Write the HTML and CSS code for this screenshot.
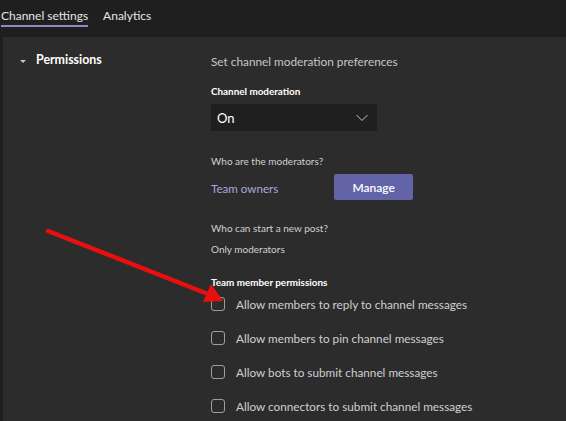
FILE: index.html
```html
<!DOCTYPE html>
<html>
<head>
<meta charset="utf-8">
<link rel="stylesheet" href="styles.css">
</head>
<body>
<header class="tabs">
  <span class="tab active">Channel settings</span>
  <span class="tab">Analytics</span>
</header>
<main class="panel">
  <div class="side">
    <span class="caret"></span>
    <span class="section-title">Permissions</span>
  </div>
  <div class="content">
    <p class="intro">Set channel moderation preferences</p>
    <p class="label strong">Channel moderation</p>
    <div class="select">
      <span>On</span>
      <svg class="chev" width="12" height="8" viewBox="0 0 12 8"><path d="M0.5 1 L6 6.5 L11.5 1" fill="none" stroke="#c8c6c4" stroke-width="1"/></svg>
    </div>
    <p class="label q1">Who are the moderators?</p>
    <div class="owners-row">
      <span class="owners">Team owners</span>
      <button class="manage">Manage</button>
    </div>
    <p class="label q2">Who can start a new post?</p>
    <p class="label answer">Only moderators</p>
    <p class="label strong perms">Team member permissions</p>
    <ul class="checks">
      <li><span class="box"></span>Allow members to reply to channel messages</li>
      <li><span class="box"></span>Allow members to pin channel messages</li>
      <li><span class="box"></span>Allow bots to submit channel messages</li>
      <li><span class="box"></span>Allow connectors to submit channel messages</li>
    </ul>
  </div>
</main>
<svg class="arrow" width="566" height="421" viewBox="0 0 566 421">
  <line x1="48" y1="231" x2="208" y2="294" stroke="#e8100f" stroke-width="4.5" stroke-linecap="round"/>
  <polygon points="223,301 203,302 211,284" fill="#e8100f"/>
</svg>
</body>
</html>
```
FILE: styles.css
```css
* { box-sizing: border-box; }
html, body { margin: 0; padding: 0; }
body {
  width: 566px;
  height: 421px;
  overflow: hidden;
  background: #1f1f1f;
  font-family: "Segoe UI", Lato, "Open Sans", sans-serif;
  color: #d6d6d6;
  position: relative;
}
.tabs {
  height: 37px;
  display: flex;
  gap: 15px;
  padding-left: 1px;
  font-size: 12px;
}
.tab {
  padding-top: 8px;
  height: 27px;
  color: #e6e6e6;
}
.tab.active {
  border-bottom: 2px solid #8b8cc7;
}
.panel {
  margin-left: 3px;
  background: #2d2c2c;
  height: 384px;
  display: flex;
}
.side {
  width: 208px;
  padding: 15px 0 0 17px;
  display: flex;
  align-items: flex-start;
  gap: 10px;
}
.caret {
  margin-top: 8px;
  width: 0; height: 0;
  border-left: 3px solid transparent;
  border-right: 3px solid transparent;
  border-top: 3px solid #c8c6c4;
}
.section-title {
  font-weight: 700;
  font-size: 12.4px;
  color: #ffffff;
}
.content {
  padding-top: 16px;
  flex: 1;
}
p { margin: 0; }
.intro {
  font-size: 11.8px;
  color: #c8c6c4;
  line-height: 17px;
}
.label {
  font-size: 10px;
  color: #d0d0d0;
  line-height: 14px;
}
.label.strong { font-weight: 700; color: #ffffff; font-size: 9.9px; }
.intro + .label { margin-top: 14px; }
.select {
  margin-top: 6px;
  width: 166px;
  height: 27px;
  background: #1f1f1f;
  display: flex;
  align-items: center;
  justify-content: space-between;
  padding: 0 9px 0 6px;
  font-size: 13px;
  color: #ffffff;
}
.q1 { margin-top: 23px; }
.owners-row {
  margin-top: 6px;
  display: flex;
  align-items: center;
  gap: 56px;
}
.owners {
  font-size: 11.6px;
  color: #a6a7dc;
  padding-top: 3px;
}
.manage {
  width: 79px;
  height: 26px;
  border: 0;
  border-radius: 2px;
  background: #6264a7;
  color: #ffffff;
  font-family: inherit;
  font-size: 12px;
  font-weight: 600;
  padding: 0;
}
.q2 { margin-top: 21px; }
.answer { margin-top: 7px; }
.perms { margin-top: 19px; }
.checks {
  list-style: none;
  margin: 0;
  padding: 0;
  display: flex;
  flex-direction: column;
  gap: 4px;
}
.checks li {
  height: 30px;
  display: flex;
  align-items: center;
  gap: 11px;
  font-size: 11.75px;
  color: #d0d0d0;
}
.box {
  width: 14px;
  height: 14px;
  border: 1px solid #a19f9d;
  border-radius: 3px;
}
.arrow {
  position: absolute;
  left: 0;
  top: 0;
  pointer-events: none;
}
```
